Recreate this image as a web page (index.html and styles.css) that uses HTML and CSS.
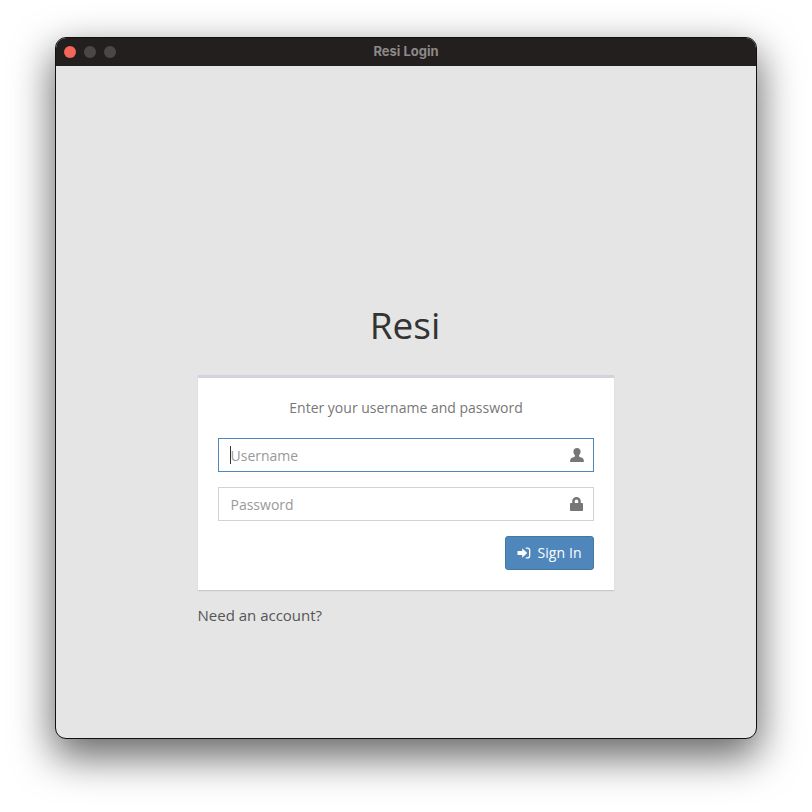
FILE: index.html
```html
<!DOCTYPE html>
<html lang="en">
<head>
<meta charset="utf-8">
<title>Resi Login</title>
<link rel="stylesheet" href="styles.css">
</head>
<body>
<div class="window">
  <header class="titlebar">
    <div class="lights">
      <span class="light light-close"></span>
      <span class="light"></span>
      <span class="light"></span>
    </div>
    <div class="title">Resi Login</div>
  </header>
  <main class="content">
    <h1 class="brand">Resi</h1>
    <form class="card">
      <p class="prompt">Enter your username and password</p>
      <div class="field field-focus">
        <input class="input" type="text" placeholder="Username">
        <span class="caret"></span>
        <svg class="field-icon" viewBox="0 0 14 14" width="14" height="14"><path fill="#777" d="M7 0C4.900 0 3.400 1.300 3.400 3.500c0 1.500.6 2.900 1.500 3.700.2.300.2.900 0 1.200-.5.500-1.600.9-3 1.400C.8 10.300.2 11.300 0 14h14c-.2-2.700-.8-3.700-1.900-4.200-1.400-.5-2.500-.9-3-1.400-.2-.3-.2-.9 0-1.200.9-.8 1.500-2.200 1.500-3.700C10.600 1.300 9.100 0 7 0z"/></svg>
      </div>
      <div class="field">
        <input class="input" type="password" placeholder="Password">
        <svg class="field-icon" viewBox="0 0 14 14" width="14" height="14"><path fill="#777" d="M2.200 6V4.300C2.200 1.700 4 0 6.500 0s4.300 1.700 4.300 4.300V6H12c.6 0 1 .4 1 1v6c0 .6-.4 1-1 1H1c-.6 0-1-.4-1-1V7c0-.6.4-1 1-1h1.200zm2.600 0h3.400V4.300c0-1.100-.7-1.800-1.700-1.800s-1.700.7-1.700 1.800V6z"/></svg>
      </div>
      <div class="actions">
        <button class="btn" type="button">
          <svg class="btn-icon" viewBox="0 0 14 14" width="14" height="14"><path fill="#fff" d="M.5 5h4.700V2.200L10.200 7l-5 4.800V9H.5z"/><path fill="#fff" d="M8.800 1.500h1.900c1.500 0 2.600 1.100 2.600 2.600v5.800c0 1.500-1.100 2.600-2.600 2.600H8.800v-1.300h1.800c.8 0 1.400-.6 1.400-1.400V4.200c0-.8-.6-1.400-1.400-1.400H8.800z"/></svg>
          <span class="btn-label">Sign In</span>
        </button>
      </div>
    </form>
    <div class="footer-link">Need an account?</div>
  </main>
</div>
</body>
</html>
```

FILE: styles.css
```css
html, body {
  margin: 0;
  padding: 0;
  background: #fff;
  height: 100%;
  overflow: hidden;
}
body {
  padding: 37px 0 0 55px;
  box-sizing: border-box;
  font-family: "Open Sans", "Liberation Sans", sans-serif;
}
.window {
  width: 702px;
  height: 702px;
  box-sizing: border-box;
  border: 1px solid #111;
  border-radius: 11px;
  overflow: hidden;
  background: #e5e5e5;
  box-shadow: 0 16px 40px 2px rgba(0, 0, 0, 0.6);
  display: flex;
  flex-direction: column;
}
.titlebar {
  flex: none;
  height: 28px;
  padding-bottom: 2px;
  box-sizing: border-box;
  background: #231f1e;
  position: relative;
  display: flex;
  align-items: center;
  justify-content: center;
}
.lights {
  position: absolute;
  left: 8px;
  top: 8px;
  display: flex;
  gap: 8px;
}
.light {
  width: 12px;
  height: 12px;
  border-radius: 50%;
  background: #4a4746;
}
.light-close {
  background: #f4655a;
}
.title {
  font-family: Inter, "Liberation Sans", sans-serif;
  font-weight: 700;
  font-size: 13px;
  color: #8c8a89;
}
.content {
  flex: 1;
  display: flex;
  flex-direction: column;
  align-items: center;
}
.brand {
  margin: 235px 2px 0 0;
  font-weight: 400;
  font-size: 37px;
  line-height: 48px;
  color: #333;
}
.card {
  box-sizing: border-box;
  width: 416px;
  height: 215px;
  margin-top: 26px;
  padding: 0 20px;
  background: #fff;
  border-top: 3px solid #d3d3dd;
  box-shadow: 0 1px 1px rgba(0, 0, 0, 0.12);
}
.prompt {
  margin: 20px 0 0;
  text-align: center;
  font-size: 14px;
  line-height: 20px;
  color: #777;
}
.field {
  position: relative;
  height: 34px;
  margin-top: 15px;
}
.prompt + .field {
  margin-top: 20px;
}
.input {
  display: block;
  box-sizing: border-box;
  width: 100%;
  height: 100%;
  padding: 0 36px 0 11.500px;
  border: 1px solid #d3d0dc;
  background: #fff;
  border-radius: 0;
  outline: none;
  font-family: inherit;
  font-size: 14px;
  color: #555;
}
.input::placeholder {
  color: #999;
  opacity: 1;
}
.field-focus .input {
  border-color: #4d88bb;
}
.caret {
  position: absolute;
  left: 12px;
  top: 8px;
  width: 1px;
  height: 18px;
  background: #333;
}
.field-icon {
  position: absolute;
  right: 10px;
  top: 10px;
}
.actions {
  display: flex;
  justify-content: flex-end;
  margin-top: 15px;
}
.btn {
  box-sizing: border-box;
  width: 89px;
  height: 34px;
  display: flex;
  align-items: center;
  justify-content: center;
  gap: 6px;
  padding: 0 0 1px;
  border: 1px solid #44799f;
  border-radius: 3px;
  background: #4f87bc;
  color: #fff;
  font-family: inherit;
  font-size: 14px;
}
.btn-label {
  letter-spacing: 0.1px;
}
.btn-icon {
  flex: none;
}
.footer-link {
  width: 416px;
  margin-top: 15px;
  font-size: 15px;
  line-height: 20px;
  color: #555;
  text-indent: -0.500px;
}
```
